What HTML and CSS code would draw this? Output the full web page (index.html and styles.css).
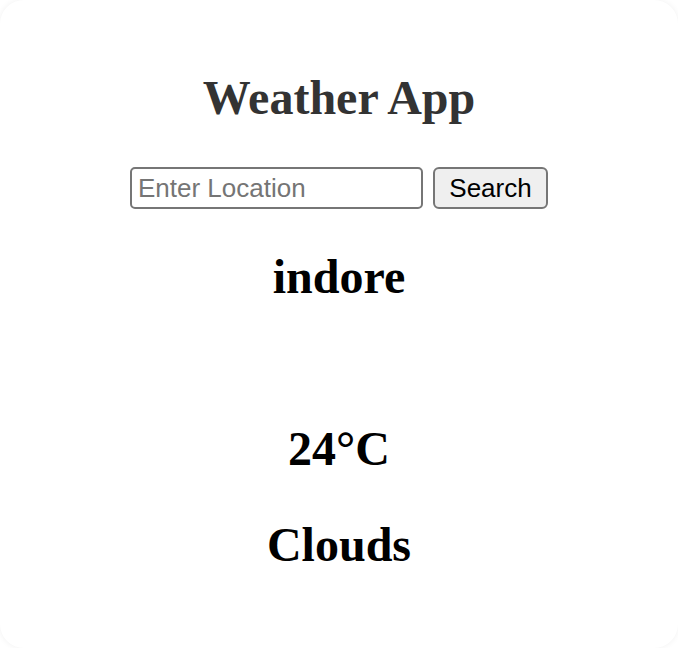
FILE: index.html
```html
<!DOCTYPE html>
<html lang="en">
<head>
<meta charset="utf-8">
<title>Weather App</title>
<link rel="stylesheet" href="styles.css">
</head>
<body>
<div class="card">
  <h1 class="title">Weather App</h1>
  <div class="search-row">
    <input class="location" type="text" placeholder="Enter Location">
    <button class="search-btn" type="button">Search</button>
  </div>
  <h2 class="info">indore</h2>
  <div class="icon-slot"></div>
  <h2 class="info info-temp">24°C</h2>
  <h2 class="info">Clouds</h2>
</div>
</body>
</html>
```
FILE: styles.css
```css
html, body {
  margin: 0;
  padding: 0;
  background: #ffffff;
}
.card {
  box-sizing: border-box;
  width: 678px;
  height: 648px;
  border-radius: 24px;
  background: #ffffff;
  box-shadow: 0 0 6px rgba(0, 0, 0, 0.06);
  padding-top: 70px;
  text-align: center;
  font-family: "Liberation Serif", "Times New Roman", serif;
  overflow: hidden;
}
.title {
  margin: 0 0 41px;
  font-size: 48px;
  line-height: 56px;
  font-weight: bold;
  color: #333333;
}
.search-row {
  display: flex;
  justify-content: center;
  align-items: center;
  gap: 10px;
  height: 42px;
}
.location {
  box-sizing: border-box;
  width: 293px;
  height: 42px;
  margin: 0;
  padding: 0 6px;
  border: 2px solid #767676;
  border-radius: 5px;
  font-family: "Liberation Sans", Arial, sans-serif;
  font-size: 26px;
  color: #000;
  background: #fff;
  outline: none;
}
.location::placeholder {
  color: #757575;
}
.search-btn {
  box-sizing: border-box;
  width: 115px;
  height: 42px;
  margin: 0;
  padding: 0 10px;
  border: 2px solid #767676;
  border-radius: 6px;
  background: #efefef;
  font-family: "Liberation Sans", Arial, sans-serif;
  font-size: 26px;
  color: #000;
}
.info {
  margin: 40px 0;
  font-size: 48px;
  line-height: 56px;
  font-weight: bold;
  color: #000;
}
.info-temp {
  margin-bottom: 38px;
}
.icon-slot {
  height: 36px;
}
```
